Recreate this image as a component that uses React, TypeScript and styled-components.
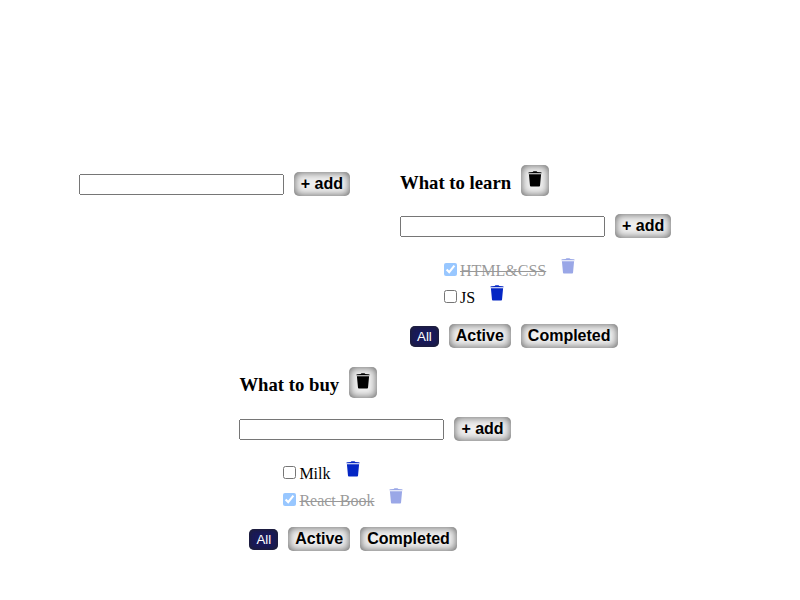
import React, { useState } from 'react';
import styled, { createGlobalStyle } from 'styled-components';

const GlobalStyle = createGlobalStyle`
  body {
    margin: 0;
    background: #fff;
    color: #000;
    font: 16px/18px "Liberation Serif", serif;
  }
`;

const Board = styled.main`
  display: flex;
  flex-direction: column;
  align-items: center;
  width: 750px;
  padding-top: 165px;
`;

const ListsRow = styled.div`
  display: flex;
  gap: 50px;
  height: 202.4px;
`;

const Card = styled.section``;

const Heading = styled.header`
  display: flex;
  gap: 10px;
  height: 31px;
  margin-bottom: 18.2px;
`;

const Title = styled.h3`
  margin: 7px 0 0;
  font-size: 18.72px;
  line-height: 22px;
`;

const Button = styled.button<{ $active?: boolean }>`
  padding: 3px 7px;
  border: 0;
  border-radius: 5px;
  background: ${(p) => (p.$active ? '#191958' : '#efefef')};
  color: ${(p) => (p.$active ? '#fff' : '#000')};
  box-shadow: inset 0 0 ${(p) => (p.$active ? '5px #222' : '8px #555')};
  font: ${(p) => (p.$active ? '400 13.333px/15px' : '700 16px/18px')} "Liberation Sans", sans-serif;
`;

const DeleteListButton = styled(Button)`
  display: flex;
  width: 28px;
  height: 31px;
  padding: 6px 7px;
`;

const AddForm = styled.div<{ $top?: number }>`
  display: flex;
  align-items: flex-start;
  gap: 10px;
  padding-top: ${(p) => p.$top ?? 0}px;
`;

const Field = styled.input`
  box-sizing: border-box;
  width: 205px;
  height: 21px;
  margin: 2px 0 0;
  padding: 1px 2px;
  outline: 0;
`;

const Tasks = styled.ul`
  margin: 19px 0 0;
  padding: 0 0 0 44px;
  list-style: none;
`;

const TaskRow = styled.li<{ $done: boolean }>`
  display: flex;
  height: 27px;
  opacity: ${(p) => (p.$done ? 0.4 : 1)};
  text-decoration: ${(p) => (p.$done ? 'line-through' : 'none')};
`;

const Check = styled.input`
  width: 13px;
  height: 13px;
  margin: 6px 3px 0 0;
`;

const TaskName = styled.span`
  margin-top: 5px;
`;

const DeleteTask = styled.span`
  display: flex;
  margin: 1px 0 0 15px;
  color: #0426c4;
`;

const Filters = styled.div`
  display: flex;
  align-items: flex-start;
  gap: 10px;
  padding: 13px 0 0 10px;

  & > :first-child {
    margin-top: 2px;
  }
`;

const TrashIcon = () => (
  <svg width="14" height="16" viewBox="0 0 14 16" fill="currentColor" aria-hidden="true">
    <path d="M.3 2.2Q.3 1.4 1.3 1.3L4.7 1Q5 .3 5.7.3h2.6Q9 .3 9.3 1l3.4.3q1 .1 1 .9v.1H.3z" />
    <path d="M.9 3.2h12.2l-1.1 11.6q-.1.7-.8.7H2.8q-.7 0-.8-.7z" />
  </svg>
);

type Task = { name: string; done: boolean };

const AddItem = ({ top }: { top?: number }) => (
  <AddForm $top={top}>
    <Field aria-label="New item" />
    <Button>+ add</Button>
  </AddForm>
);

const TodoList = ({ title, initial }: { title: string; initial: Task[] }) => {
  const [tasks, setTasks] = useState(initial);
  const [filter, setFilter] = useState('All');
  const visible = tasks.filter((t) => filter === 'All' || t.done === (filter === 'Completed'));
  return (
    <Card>
      <Heading>
        <Title>{title}</Title>
        <DeleteListButton aria-label="Delete list"><TrashIcon /></DeleteListButton>
      </Heading>
      <AddItem />
      <Tasks>
        {visible.map((t) => (
          <TaskRow key={t.name} $done={t.done}>
            <Check
              type="checkbox"
              checked={t.done}
              onChange={() => setTasks(tasks.map((x) => (x === t ? { ...x, done: !x.done } : x)))}
            />
            <TaskName>{t.name}</TaskName>
            <DeleteTask><TrashIcon /></DeleteTask>
          </TaskRow>
        ))}
      </Tasks>
      <Filters>
        {['All', 'Active', 'Completed'].map((name) => (
          <Button key={name} $active={filter === name} onClick={() => setFilter(name)}>{name}</Button>
        ))}
      </Filters>
    </Card>
  );
};

export default function App() {
  return (
    <>
      <GlobalStyle />
      <Board>
        <ListsRow>
          <AddItem top={7} />
          <TodoList title="What to learn" initial={[{ name: 'HTML&CSS', done: true }, { name: 'JS', done: false }]} />
        </ListsRow>
        <TodoList title="What to buy" initial={[{ name: 'Milk', done: false }, { name: 'React Book', done: true }]} />
      </Board>
    </>
  );
}
